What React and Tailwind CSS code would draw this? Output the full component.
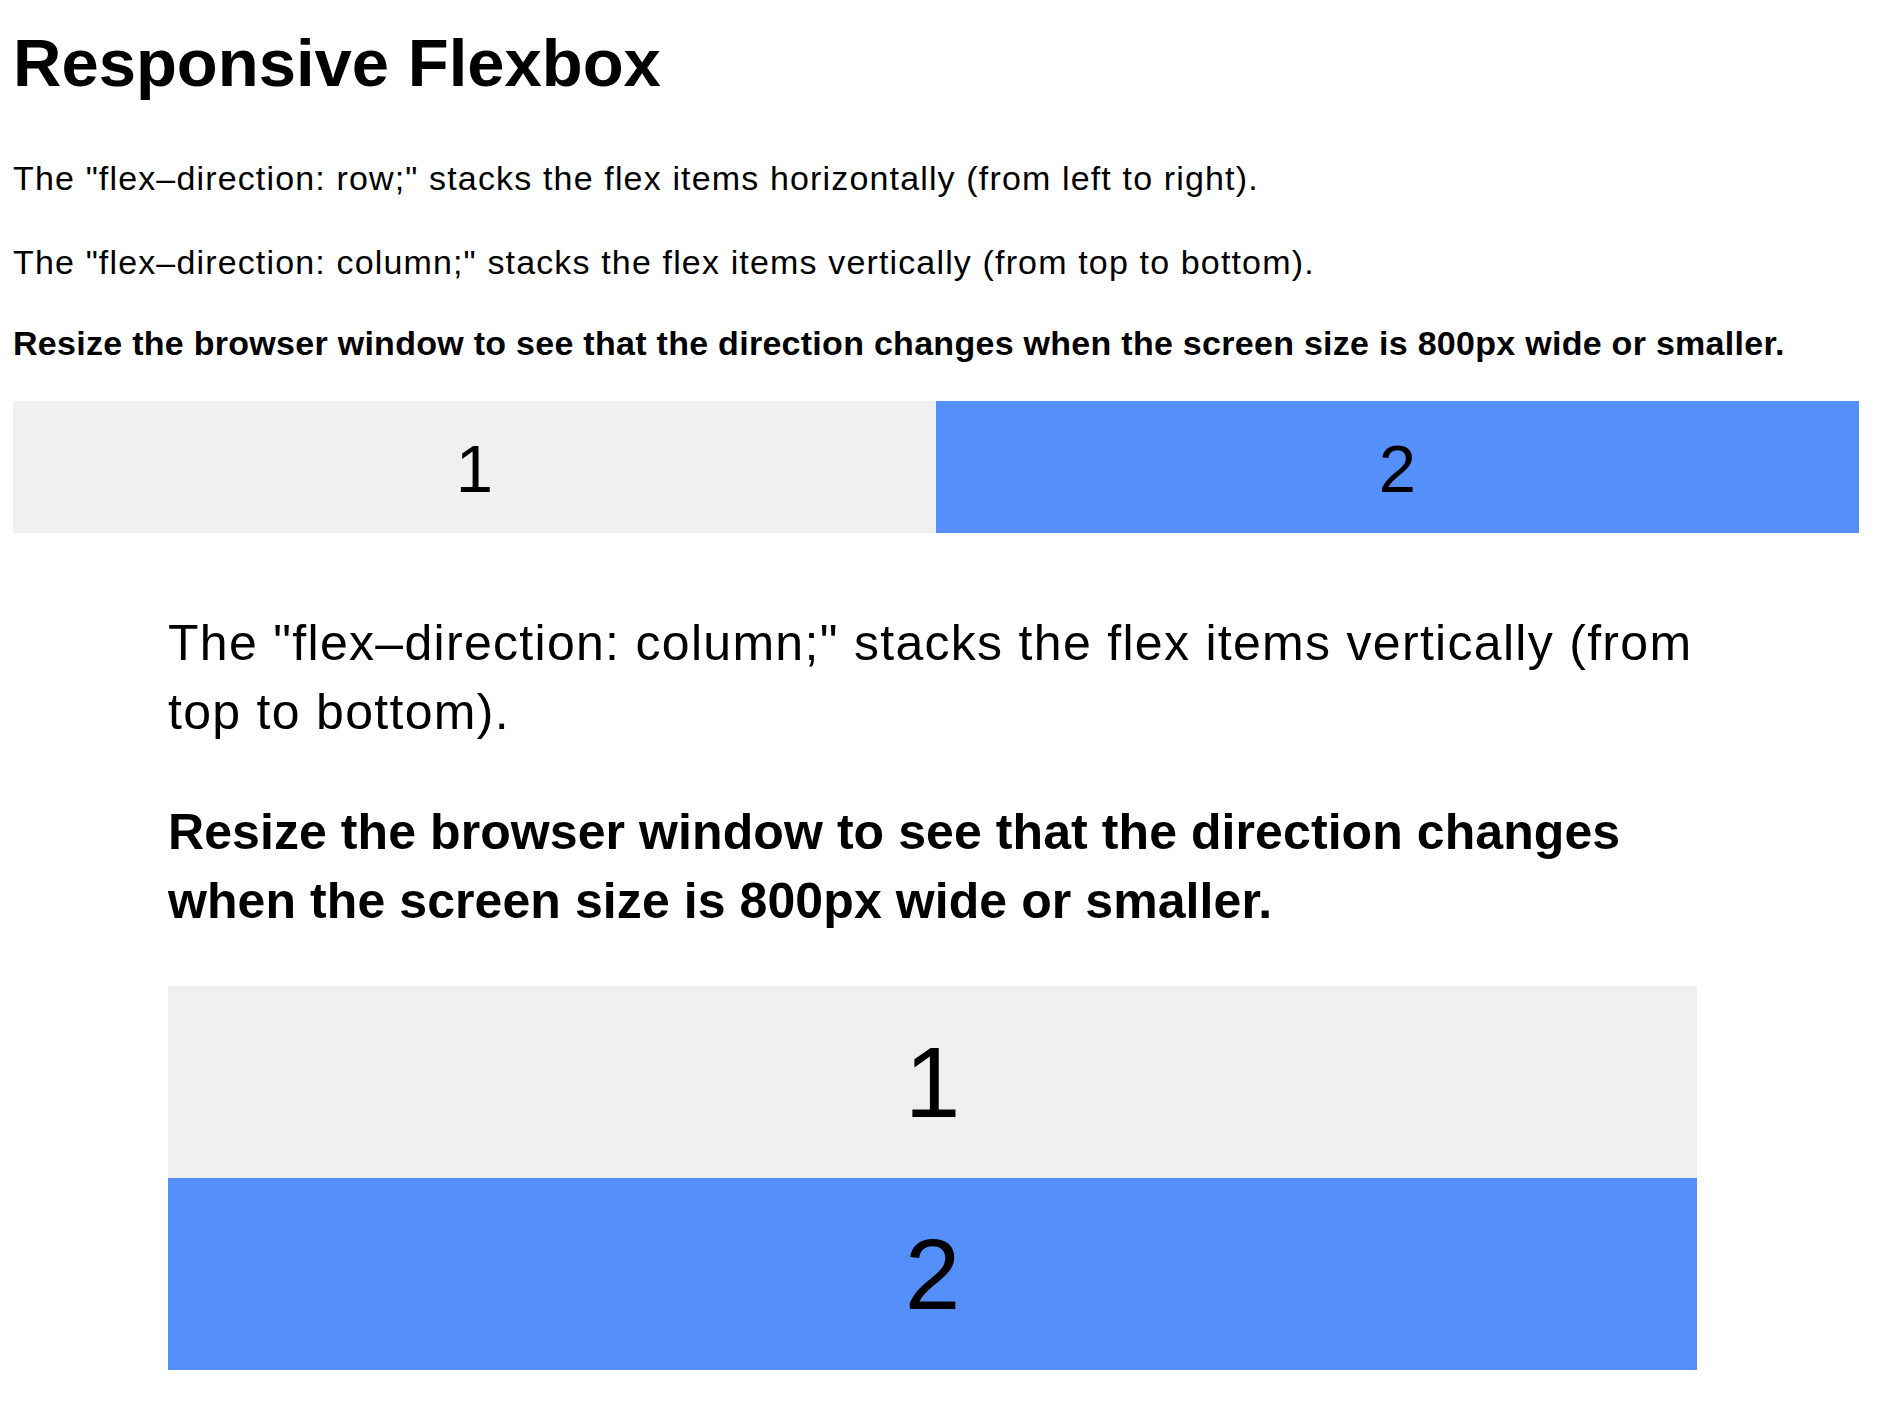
import React from 'react';

const ROW_TEXT = 'The "flex–direction: row;" stacks the flex items horizontally (from left to right).';
const COL_TEXT = 'The "flex–direction: column;" stacks the flex items vertically (from top to bottom).';
const RESIZE_TEXT = 'Resize the browser window to see that the direction changes when the screen size is 800px wide or smaller.';

function App() {
  return (
    <div className="min-h-[1417px] bg-white text-black font-['Liberation_Sans',Arial,sans-serif] pl-[13px]">
      <h1 className="pt-[24px] text-[67px] leading-[77px] font-bold">Responsive Flexbox</h1>

      <p className="mt-[57px] text-[34px] leading-[40px] tracking-[1.15px]">{ROW_TEXT}</p>
      <p className="mt-[44px] text-[34px] leading-[40px] tracking-[1.15px]">{COL_TEXT}</p>
      <p className="mt-[41px] text-[34px] leading-[40px] font-bold tracking-[0.28px]">{RESIZE_TEXT}</p>

      {/* row layout */}
      <div className="mt-[38px] flex w-[1846px] text-center text-[67px] leading-[77px]">
        <div className="flex-1 bg-[#f0f0f0] pt-[29px] pb-[26px]">1</div>
        <div className="flex-1 bg-[#5590fa] pt-[29px] pb-[26px]">2</div>
      </div>

      {/* column layout, narrow window */}
      <div className="ml-[155px] w-[1529px] pb-[45px]">
        <p className="mt-[76px] text-[50px] leading-[69px] tracking-[1.3px]">{COL_TEXT}</p>
        <p className="mt-[51px] text-[50px] leading-[69px] font-bold tracking-[0.08px]">{RESIZE_TEXT}</p>
        <div className="mt-[50px] flex flex-col text-center text-[100px] leading-[115px]">
          <div className="bg-[#f0f0f0] pt-[39px] pb-[38px]">1</div>
          <div className="bg-[#5590fa] pt-[39px] pb-[38px]">2</div>
        </div>
      </div>
    </div>
  );
}

export default App;
